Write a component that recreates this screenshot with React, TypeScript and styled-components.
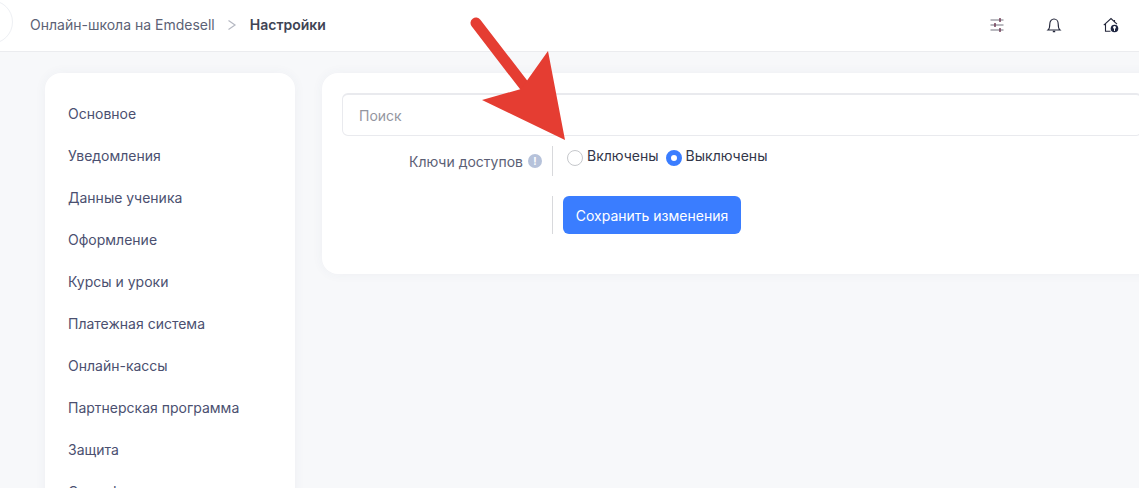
import React from "react";
import styled, { createGlobalStyle } from "styled-components";

const menuItems = [
  "Основное",
  "Уведомления",
  "Данные ученика",
  "Оформление",
  "Курсы и уроки",
  "Платежная система",
  "Онлайн-кассы",
  "Партнерская программа",
  "Защита",
  "Сертификаты",
];

function App() {
  return (
    <Page>
      <GlobalStyle />
      <Header>
        <MenuToggle />
        <Crumb>Онлайн-школа на Emdesell</Crumb>
        <CrumbArrow viewBox="0 0 10 12">
          <path d="M1.5 1.5 L8 6 L1.5 10.5" fill="none" stroke="#b5b8c2" strokeWidth="1.2" />
        </CrumbArrow>
        <CrumbActive>Настройки</CrumbActive>
        <HeaderIcons>
          <HeaderIcon viewBox="0 0 16 16">
            <path d="M1.500 3h13M1.500 8h13M1.500 13h13" stroke="#a3a3ab" strokeWidth="1.600" />
            <path d="M11 1v4M6 6v4M11 11v4" stroke="#6d3550" strokeWidth="1.400" />
          </HeaderIcon>
          <HeaderIcon viewBox="0 0 16 16">
            <path d="M2 13c1.200-1 1.800-2.500 1.800-6 0-3 1.900-5 4.200-5s4.200 2 4.200 5c0 3.500.6 5 1.800 6z" fill="none" stroke="#23263a" strokeWidth="1.100" />
            <path d="M6.800 14.500h2.400" stroke="#23263a" strokeWidth="1.500" />
          </HeaderIcon>
          <HeaderIcon viewBox="0 0 16 16">
            <path d="M.8 8.200 8 1.500l6 5.700M11.500 3v2.500M2.500 7v7.200h5" fill="none" stroke="#23263a" strokeWidth="1.100" />
            <circle cx="11.500" cy="11.500" r="3.800" fill="#1d2540" />
            <circle cx="11.500" cy="10.500" r="1.400" fill="#fff" />
            <path d="M11.500 10.500v3.500" stroke="#fff" strokeWidth="1" />
          </HeaderIcon>
        </HeaderIcons>
      </Header>
      <Content>
        <Sidebar>
          {menuItems.map((item) => (
            <MenuItem key={item}>{item}</MenuItem>
          ))}
        </Sidebar>
        <Panel>
          <SearchInput>Поиск</SearchInput>
          <FormRow>
            <RowLabel>
              Ключи доступов
              <HintBadge>!</HintBadge>
            </RowLabel>
            <RadioCell>
              <RadioOption>
                <RadioDot />
                Включены
              </RadioOption>
              <RadioOption>
                <RadioDot checked />
                Выключены
              </RadioOption>
            </RadioCell>
          </FormRow>
          <SaveRow>
            <RowLabel />
            <SaveCell>
              <SaveButton>Сохранить изменения</SaveButton>
            </SaveCell>
          </SaveRow>
        </Panel>
      </Content>
      <Arrow viewBox="0 0 120 140">
        <path d="M9 8 L66 82" stroke="#e53d32" strokeWidth="11" strokeLinecap="round" fill="none" />
        <polygon points="81,36 98,125 15,85 54,74" fill="#e53d32" />
      </Arrow>
    </Page>
  );
}

export default App;

const GlobalStyle = createGlobalStyle`
  html, body {
    margin: 0;
    height: 100%;
    overflow: hidden;
    background: #f7f8fa;
  }
  body {
    font-family: Inter, "Noto Sans", sans-serif;
  }
`;

const Page = styled.div`
  position: relative;
  width: 1139px;
  height: 488px;
  overflow: hidden;
  background: #f7f8fa;
`;

const Header = styled.header`
  display: flex;
  align-items: center;
  height: 52px;
  padding-bottom: 2px;
  box-sizing: border-box;
  background: #fff;
  border-bottom: 1px solid #ebecef;
`;

const MenuToggle = styled.div`
  flex: none;
  width: 44px;
  height: 44px;
  margin: 0 17px 5px -31px;
  background: #fff;
  border: 1px solid #eef0f4;
  border-radius: 50%;
  box-sizing: border-box;
`;

const Crumb = styled.span`
  font-size: 14px;
  color: #5c6275;
`;

const CrumbArrow = styled.svg`
  width: 10px;
  height: 12px;
  margin: 0 13px 0 12px;
`;

const CrumbActive = styled.span`
  font-size: 14px;
  font-weight: 600;
  color: #3f4454;
`;

const HeaderIcons = styled.div`
  display: flex;
  gap: 41px;
  margin-left: auto;
  margin-right: 20px;
`;

const HeaderIcon = styled.svg`
  width: 16px;
  height: 16px;
`;

const Content = styled.main`
  display: flex;
  align-items: flex-start;
  gap: 27px;
  padding: 21px 0 0 45px;
`;

const Sidebar = styled.nav`
  flex: none;
  width: 250px;
  height: 460px;
  padding: 20px 0 0 23px;
  box-sizing: border-box;
  background: #fff;
  border-radius: 16px;
  box-shadow: 0 0 12px rgba(60, 70, 110, 0.05);
`;

const MenuItem = styled.div`
  height: 42px;
  line-height: 42px;
  font-size: 14px;
  color: #4b5070;
`;

const Panel = styled.section`
  flex: none;
  width: 840px;
  height: 201px;
  padding: 20px 20px;
  box-sizing: border-box;
  background: #fff;
  border-radius: 16px;
  box-shadow: 0 0 12px rgba(60, 70, 110, 0.05);
`;

const SearchInput = styled.div`
  height: 43px;
  line-height: 41px;
  padding-left: 16px;
  box-sizing: border-box;
  font-size: 14px;
  color: #94969f;
  border: 1px solid #e9eaee;
  border-top-width: 2px;
  border-radius: 6px;
`;

const FormRow = styled.div`
  display: flex;
  margin-top: 10px;
`;

const SaveRow = styled.div`
  display: flex;
  margin-top: 20px;
`;

const RowLabel = styled.div`
  flex: none;
  display: flex;
  align-items: center;
  justify-content: flex-end;
  width: 210px;
  padding-right: 10px;
  box-sizing: border-box;
  font-size: 14px;
  color: #5b6075;
`;

const HintBadge = styled.span`
  display: inline-flex;
  align-items: center;
  justify-content: center;
  width: 14px;
  height: 14px;
  margin-left: 5px;
  border-radius: 50%;
  font-size: 10px;
  font-weight: 700;
  color: #fff;
  background: #b6c2da;
`;

const RadioCell = styled.div`
  display: flex;
  gap: 7px;
  height: 30px;
  padding: 1px 0 0 14px;
  box-sizing: border-box;
  border-left: 1px solid #d8d9dc;
`;

const RadioOption = styled.label`
  display: flex;
  align-items: flex-start;
  gap: 4px;
  font-size: 14px;
  line-height: 17px;
  color: #33374a;
`;

const RadioDot = styled.span<{ checked?: boolean }>`
  flex: none;
  width: 16px;
  height: 16px;
  margin-top: 3px;
  box-sizing: border-box;
  border-radius: 50%;
  background: #fff;
  border: ${(props) => (props.checked ? "5px solid #3a7dff" : "1px solid #c6c8cc")};
`;

const SaveCell = styled.div`
  height: 38px;
  padding-left: 10px;
  border-left: 1px solid #d8d9dc;
`;

const SaveButton = styled.button`
  width: 178px;
  height: 38px;
  padding: 0;
  border: none;
  border-radius: 6px;
  font-family: inherit;
  font-size: 14px;
  font-weight: 400;
  color: #fff;
  background: #3a7dff;
`;

const Arrow = styled.svg`
  position: absolute;
  left: 467px;
  top: 15px;
  width: 120px;
  height: 140px;
`;
